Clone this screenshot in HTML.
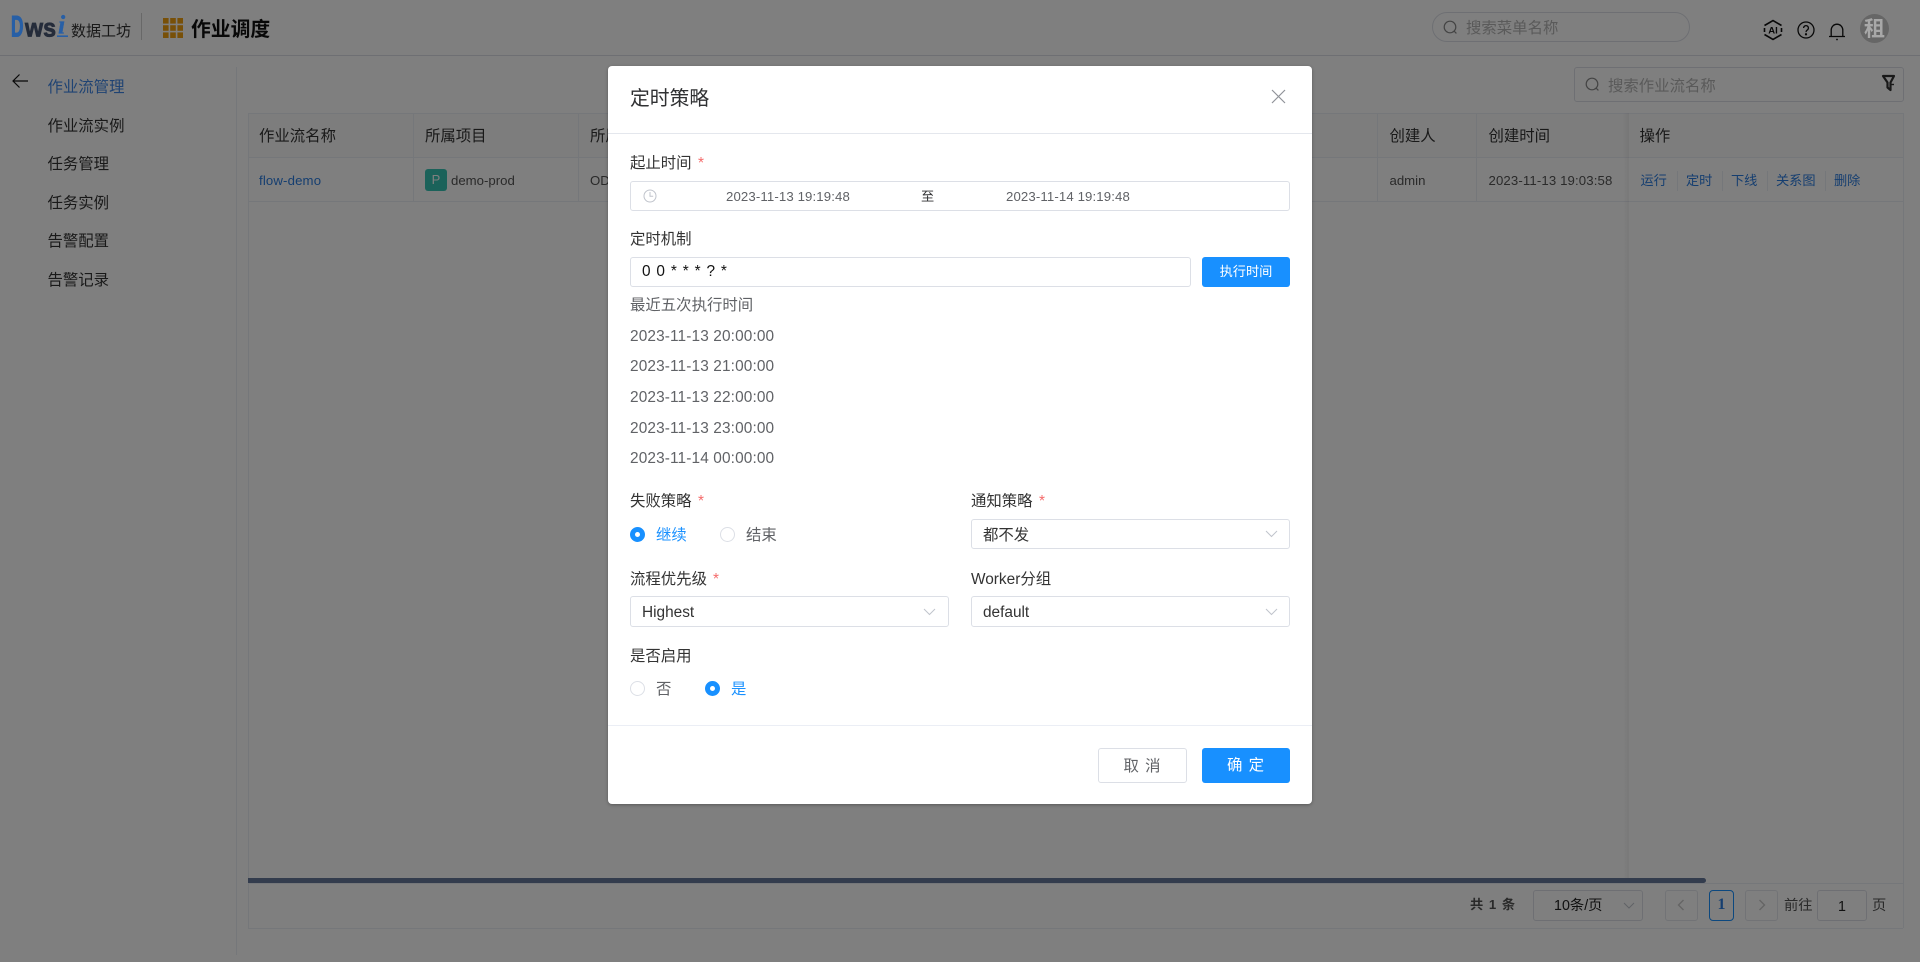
<!DOCTYPE html>
<html lang="zh-CN">
<head>
<meta charset="utf-8">
<title>作业调度</title>
<style>
*{box-sizing:border-box;margin:0;padding:0}
html,body{width:1920px;height:962px;overflow:hidden;background:#fff}
body{position:relative;font-family:"Liberation Sans","Noto Sans CJK SC",sans-serif;font-size:15.4px;color:#333}
.t{position:absolute;white-space:nowrap;line-height:20px;height:20px;margin-top:1px}
.b{position:absolute}
.mi{left:47.5px;color:#333}
.th{color:#333;margin-top:2px}
.td{font-size:13.2px;color:#555}
.dt{letter-spacing:.13px}
.a{font-size:13.2px;color:#2b7de0}
.v{position:absolute;width:1px;background:#ebeef5}
.h{position:absolute;height:1px;background:#ebeef5}
.ipt{position:absolute;background:#fff;border:1px solid #dcdfe6;border-radius:3px}
.lab{color:#333}
.star{color:#f56c6c;position:absolute}
.gr{color:#606266}
#overlay{position:absolute;left:0;top:0;width:1920px;height:962px;background:rgba(0,0,0,.5)}
#modal{position:absolute;left:608px;top:66px;width:704px;height:738px;background:#fff;border-radius:4px;box-shadow:0 1px 3px rgba(0,0,0,.3)}
.radio{position:absolute;width:15px;height:15px;border-radius:50%;border:1px solid #dcdfe6;background:#fff}
.radio.on{border:none;background:#1890ff}
.radio.on:after{content:"";position:absolute;left:5px;top:5px;width:5px;height:5px;border-radius:50%;background:#fff}
.arrow{position:absolute}
</style>
</head>
<body>
<!-- page header -->
<div class="h" style="left:0;top:55px;width:1920px;background:#dcdfe6"></div>
<div class="t" style="left:71px;top:20.5px;font-size:15px;color:#333">数据工坊</div>
<div class="v" style="left:141px;top:13px;height:27px;background:#d0d0d0"></div>
<svg class="b" style="left:163px;top:18px" width="20" height="20" viewBox="0 0 20 20" fill="#f0a010">
<rect x="0" y="0" width="5.6" height="5.6"/><rect x="7.2" y="0" width="5.6" height="5.6"/><rect x="14.4" y="0" width="5.6" height="5.6"/>
<rect x="0" y="7.2" width="5.6" height="5.6"/><rect x="7.2" y="7.2" width="5.6" height="5.6"/><rect x="14.4" y="7.2" width="5.6" height="5.6"/>
<rect x="0" y="14.4" width="5.6" height="5.6"/><rect x="7.2" y="14.4" width="5.6" height="5.6"/><rect x="14.4" y="14.4" width="5.6" height="5.6"/>
</svg>
<div class="t" style="left:191px;top:19px;font-size:19.8px;font-weight:bold;color:#111">作业调度</div>

<!-- top search -->
<div class="b" style="left:1432px;top:12px;width:258px;height:30px;border:1px solid #dcdfe6;border-radius:15px"></div>
<svg class="b" style="left:1443px;top:20px" width="15" height="15" viewBox="0 0 15 15" fill="none" stroke="#888" stroke-width="1.2"><circle cx="7" cy="7" r="5.8"/><path d="M11.2 11.2l2.2 2.2"/></svg>
<div class="t" style="left:1466px;top:17.5px;color:#b4b4b4">搜索菜单名称</div>
<svg class="b" style="left:1762px;top:19px" width="22" height="22" viewBox="0 0 22 22" fill="none" stroke="#111" stroke-width="1.6"><path d="M2.5 6.5L11 1.5l8.5 5M19.5 15.5l-8.5 5-8.5-5M2.5 9v4M19.5 9v4"/><text x="11" y="14.5" font-size="9.5" font-weight="bold" fill="#111" stroke="none" text-anchor="middle" font-family="Liberation Sans">AI</text></svg>
<svg class="b" style="left:1797px;top:21px" width="18" height="18" viewBox="0 0 18 18" fill="none" stroke="#111" stroke-width="1.3"><circle cx="9" cy="9" r="8"/><path d="M6.6 7a2.4 2.4 0 1 1 3.6 2.1c-.8.5-1.2 1-1.2 2"/><circle cx="9" cy="13.3" r=".5" fill="#111"/></svg>
<svg class="b" style="left:1828px;top:21px" width="18" height="20" viewBox="0 0 18 20" fill="none" stroke="#111" stroke-width="1.3"><path d="M1 15.5h16M3.2 15.5V9a5.8 5.8 0 0 1 11.6 0v6.5"/><circle cx="9" cy="18.5" r=".9" fill="#111" stroke="none"/></svg>

<!-- sidebar -->
<svg class="b" style="left:12px;top:73px" width="16" height="16" viewBox="0 0 16 16" fill="none" stroke="#111" stroke-width="1.2"><path d="M16 8H1M7.5 1.5L1 8l6.5 6.5"/></svg>
<div class="t mi" style="top:77px;color:#3f86e6">作业流管理</div>
<div class="t mi" style="top:116px">作业流实例</div>
<div class="t mi" style="top:154px">任务管理</div>
<div class="t mi" style="top:192.5px">任务实例</div>
<div class="t mi" style="top:231px">告警配置</div>
<div class="t mi" style="top:269.5px">告警记录</div>
<div class="v" style="left:236px;top:67px;height:888px"></div>

<!-- second search -->
<div class="b" style="left:1574px;top:67px;width:330px;height:35px;border:1px solid #dcdfe6;border-radius:3px"></div>
<svg class="b" style="left:1585px;top:77px" width="15" height="15" viewBox="0 0 15 15" fill="none" stroke="#888" stroke-width="1.2"><circle cx="7" cy="7" r="5.8"/><path d="M11.2 11.2l2.2 2.2"/></svg>
<div class="t" style="left:1608px;top:75.5px;color:#b4b4b4">搜索作业流名称</div>
<svg class="b" style="left:1881px;top:74px" width="15" height="18" viewBox="0 0 15 18" fill="none" stroke="#333" stroke-width="2.2" stroke-linejoin="round"><path d="M2 2h11L9.5 8.5V16L6.5 13.5V8.5z"/><path d="M10 10.5h3" stroke-width="1.4"/></svg>

<!-- table -->
<div class="b" style="left:248px;top:113px;width:1655px;height:44px;background:#fafafa"></div>
<div class="h" style="left:248px;top:113px;width:1655px"></div>
<div class="h" style="left:248px;top:157px;width:1655px"></div>
<div class="h" style="left:248px;top:201px;width:1655px"></div>
<div class="v" style="left:248px;top:113px;height:815px"></div>
<div class="v" style="left:1903px;top:113px;height:815px"></div>
<div class="v" style="left:413px;top:113px;height:88px"></div>
<div class="v" style="left:578px;top:113px;height:88px"></div>
<div class="v" style="left:1377px;top:113px;height:88px"></div>
<div class="v" style="left:1476px;top:113px;height:88px"></div>
<div class="b" style="left:1623px;top:113px;width:6px;height:765px;background:linear-gradient(to right,rgba(0,0,0,0),rgba(0,0,0,.05))"></div>
<div class="t th" style="left:259px;top:125px">作业流名称</div>
<div class="t th" style="left:425px;top:125px">所属项目</div>
<div class="t th" style="left:590px;top:125px">所属</div>
<div class="t th" style="left:1389.5px;top:125px">创建人</div>
<div class="t th" style="left:1488.5px;top:125px">创建时间</div>
<div class="t th" style="left:1639.5px;top:125px">操作</div>
<div class="t td" style="left:259px;top:170px;color:#2b7de0;letter-spacing:.15px">flow-demo</div>
<div class="b" style="left:425px;top:169px;width:22px;height:22px;border-radius:3px;background:#36c5b4;color:#fff;font-size:13px;line-height:22px;text-align:center">P</div>
<div class="t td" style="left:451px;top:170px">demo-prod</div>
<div class="t td" style="left:590px;top:170px">OD</div>
<div class="t td" style="left:1389.5px;top:170px">admin</div>
<div class="t td dt" style="left:1488.5px;top:170px">2023-11-13 19:03:58</div>
<div class="t a" style="left:1640.5px;top:170px">运行</div>
<div class="t a" style="left:1686px;top:170px">定时</div>
<div class="t a" style="left:1731px;top:170px">下线</div>
<div class="t a" style="left:1776px;top:170px">关系图</div>
<div class="t a" style="left:1834px;top:170px">删除</div>
<div class="v" style="left:1676.5px;top:171px;height:20px"></div>
<div class="v" style="left:1722px;top:171px;height:20px"></div>
<div class="v" style="left:1766.5px;top:171px;height:20px"></div>
<div class="v" style="left:1825px;top:171px;height:20px"></div>

<!-- scrollbar + pagination -->
<div class="b" style="left:248px;top:878px;width:1458px;height:5px;background:#66799b;border-radius:0 3px 3px 0"></div>
<div class="h" style="left:248px;top:928px;width:1655px"></div>
<div class="h" style="left:248px;top:883px;width:1655px"></div>
<div class="t" style="left:1470px;top:894px;font-size:13.2px;font-weight:bold;color:#555;letter-spacing:1px">共 1 条</div>
<div class="b" style="left:1533px;top:890px;width:110px;height:31px;border:1px solid #dcdfe6;border-radius:3px"></div>
<div class="t" style="left:1554px;top:895px;font-size:14.3px;color:#222">10条/页</div>
<svg class="b" style="left:1623px;top:902px" width="12" height="8" viewBox="0 0 12 8" fill="none" stroke="#c0c4cc" stroke-width="1"><path d="M1 1l5 5 5-5"/></svg>
<div class="b" style="left:1665px;top:890px;width:33px;height:31px;border:1px solid #e4e7ed;border-radius:3px"></div>
<svg class="b" style="left:1677px;top:899px" width="8" height="12" viewBox="0 0 8 12" fill="none" stroke="#c8c8c8" stroke-width="1.4"><path d="M6.5 1L1.5 6l5 5"/></svg>
<div class="b" style="left:1709px;top:890px;width:25px;height:31px;border:1px solid #1890ff;border-radius:4px;color:#2b7de0;font-weight:bold;font-family:'Liberation Serif',serif;font-size:16px;line-height:28px;text-align:center">1</div>
<div class="b" style="left:1745px;top:890px;width:33px;height:31px;border:1px solid #e4e7ed;border-radius:3px"></div>
<svg class="b" style="left:1758px;top:899px" width="8" height="12" viewBox="0 0 8 12" fill="none" stroke="#c8c8c8" stroke-width="1.4"><path d="M1.5 1l5 5-5 5"/></svg>
<div class="t" style="left:1784px;top:895px;font-size:14.3px;color:#555">前往</div>
<div class="b" style="left:1817px;top:890px;width:50px;height:31px;border:1px solid #dcdfe6;border-radius:3px;color:#222;font-size:14.3px;line-height:33px;text-align:center">1</div>
<div class="t" style="left:1872px;top:895px;font-size:14.3px;color:#555">页</div>

<div id="overlay"></div>

<!-- logo and avatar, colours as seen through the mask -->
<svg class="b" style="left:8px;top:10px" width="66" height="32" viewBox="0 0 66 32" font-family="Liberation Sans" font-weight="bold">
<text x="3" y="26.5" font-size="30" fill="#275fa6" stroke="#275fa6" stroke-width="1.1" textLength="12.5" lengthAdjust="spacingAndGlyphs">D</text>
<text x="17" y="26.5" font-size="26" fill="#252c3a" stroke="#252c3a" stroke-width=".8" textLength="31" lengthAdjust="spacingAndGlyphs">ws</text>
<text x="50" y="23.5" font-size="26" font-style="italic" font-family="Liberation Serif" fill="#275fa6" stroke="#275fa6" stroke-width=".3">i</text>
<path d="M49 26.2h11" stroke="#275fa6" stroke-width="1.6"/>
</svg>
<div class="b" style="left:1860px;top:14px;width:29px;height:29px;border-radius:50%;background:#666;color:#a8a8a8;font-size:21px;font-weight:bold;line-height:32px;text-align:center">租</div>

<!-- dialog -->
<div id="modal"></div>
<div class="t" style="left:630px;top:87.5px;font-size:19.8px;height:20px;color:#303133">定时策略</div>
<svg class="b" style="left:1271px;top:89px" width="15" height="15" viewBox="0 0 15 15" fill="none" stroke="#909399" stroke-width="1.2"><path d="M1 1l13 13M14 1L1 14"/></svg>
<div class="h" style="left:608px;top:133px;width:704px;background:#e4e7ed"></div>

<div class="t lab" style="left:630px;top:152.5px">起止时间</div>
<div class="t star" style="left:698px;top:152.5px;font-size:15.4px">*</div>
<div class="ipt" style="left:630px;top:181px;width:660px;height:30px"></div>
<svg class="b" style="left:643px;top:189px" width="14" height="14" viewBox="0 0 14 14" fill="none" stroke="#c0c4cc" stroke-width="1"><circle cx="7" cy="7" r="6"/><path d="M7 3v4.3h3.2"/></svg>
<div class="t dt" style="left:726px;top:186px;font-size:13.2px;color:#606266">2023-11-13 19:19:48</div>
<div class="t" style="left:921px;top:185.5px;font-size:13.2px;color:#303133">至</div>
<div class="t dt" style="left:1006px;top:186px;font-size:13.2px;color:#606266">2023-11-14 19:19:48</div>

<div class="t lab" style="left:630px;top:228.5px">定时机制</div>
<div class="ipt" style="left:630px;top:257px;width:561px;height:30px"></div>
<div class="t" style="left:642px;top:261px;color:#111;letter-spacing:.8px">0 0 * * * ? *</div>
<div class="b" style="left:1202px;top:257px;width:88px;height:30px;border-radius:3px;background:#1890ff;color:#fff;font-size:13.2px;line-height:30px;text-align:center">执行时间</div>

<div class="t gr" style="left:630px;top:294.5px">最近五次执行时间</div>
<div class="t gr dt" style="left:630px;top:325.5px">2023-11-13 20:00:00</div>
<div class="t gr dt" style="left:630px;top:355.5px">2023-11-13 21:00:00</div>
<div class="t gr dt" style="left:630px;top:386.5px">2023-11-13 22:00:00</div>
<div class="t gr dt" style="left:630px;top:417.5px">2023-11-13 23:00:00</div>
<div class="t gr dt" style="left:630px;top:448px">2023-11-14 00:00:00</div>

<div class="t lab" style="left:630px;top:490.5px">失败策略</div>
<div class="t star" style="left:698px;top:490.5px">*</div>
<div class="t lab" style="left:971px;top:490.5px">通知策略</div>
<div class="t star" style="left:1039px;top:490.5px">*</div>
<div class="radio on" style="left:630px;top:527px"></div>
<div class="t" style="left:656px;top:524.5px;color:#1890ff">继续</div>
<div class="radio" style="left:720px;top:527px"></div>
<div class="t gr" style="left:746px;top:524.5px">结束</div>
<div class="ipt" style="left:971px;top:519px;width:319px;height:30px"></div>
<div class="t" style="left:983px;top:524.5px;color:#333">都不发</div>
<svg class="arrow" style="left:1265px;top:530px" width="13" height="8" viewBox="0 0 13 8" fill="none" stroke="#c0c4cc" stroke-width="1"><path d="M1 1l5.5 5.5L12 1"/></svg>

<div class="t lab" style="left:630px;top:568.5px">流程优先级</div>
<div class="t star" style="left:713px;top:568.5px">*</div>
<div class="t lab" style="left:971px;top:568.5px">Worker分组</div>
<div class="ipt" style="left:630px;top:596px;width:319px;height:31px"></div>
<div class="t" style="left:642px;top:601.5px;color:#333">Highest</div>
<svg class="arrow" style="left:923px;top:608px" width="13" height="8" viewBox="0 0 13 8" fill="none" stroke="#c0c4cc" stroke-width="1"><path d="M1 1l5.5 5.5L12 1"/></svg>
<div class="ipt" style="left:971px;top:596px;width:319px;height:31px"></div>
<div class="t" style="left:983px;top:601.5px;color:#333">default</div>
<svg class="arrow" style="left:1265px;top:608px" width="13" height="8" viewBox="0 0 13 8" fill="none" stroke="#c0c4cc" stroke-width="1"><path d="M1 1l5.5 5.5L12 1"/></svg>

<div class="t lab" style="left:630px;top:645.5px">是否启用</div>
<div class="radio" style="left:630px;top:681px"></div>
<div class="t gr" style="left:656px;top:678.5px">否</div>
<div class="radio on" style="left:705px;top:681px"></div>
<div class="t" style="left:731px;top:678.5px;color:#1890ff">是</div>

<div class="h" style="left:608px;top:725px;width:704px;background:#ebeef5"></div>
<div class="b" style="left:1098px;top:748px;width:89px;height:35px;background:#fff;border:1px solid #dcdfe6;border-radius:3px;color:#606266;line-height:35px;text-align:center;letter-spacing:1px">取 消</div>
<div class="b" style="left:1202px;top:748px;width:88px;height:35px;background:#1890ff;border-radius:3px;color:#fff;line-height:36px;text-align:center;letter-spacing:1px">确 定</div>
</body>
</html>
